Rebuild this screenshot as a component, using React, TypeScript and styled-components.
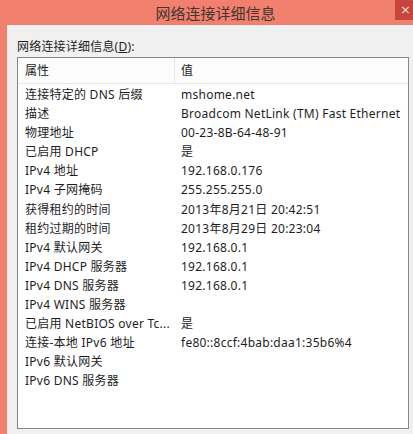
import React from 'react'
import styled, { createGlobalStyle } from 'styled-components'

const GlobalStyle = createGlobalStyle`
  html, body {
    margin: 0;
    padding: 0;
    background: #f0f0f0;
  }
  body {
    font-family: "Noto Sans", "Noto Sans CJK SC", sans-serif;
  }
`

const Window = styled.div`
  width: 413px;
  height: 434px;
  display: flex;
  flex-direction: column;
  background: #f1806f;
  overflow: hidden;
`

const TitleBar = styled.div`
  height: 25px;
  display: flex;
  align-items: stretch;
  flex-shrink: 0;
`

const Title = styled.div`
  flex: 1;
  padding-left: 36px;
  text-align: center;
  font-family: "Noto Sans CJK SC", sans-serif;
  font-size: 15px;
  line-height: 25px;
  color: #44352f;
`

const CloseButton = styled.div`
  width: 18px;
  height: 20px;
  background: #c8453d;
  color: #f4dcd8;
  font-family: "DejaVu Sans", sans-serif;
  font-size: 13px;
  line-height: 19px;
  padding-left: 5px;
  box-sizing: border-box;
`

const Frame = styled.div`
  flex: 1;
  display: flex;
  padding-left: 7px;
`

const Body = styled.div`
  flex: 1;
  background: #f0f0f0;
  padding: 14px 4px 5px 10px;
  display: flex;
  flex-direction: column;
`

const Label = styled.div`
  font-size: 12px;
  line-height: 16px;
  color: #1e1e1e;
  margin-bottom: 2px;
  letter-spacing: 0.2px;

  u {
    text-decoration: underline;
  }
`

const ListBox = styled.div`
  flex: 1;
  background: #fff;
  border: 1px solid #828790;
  display: flex;
  flex-direction: column;
`

const HeaderRow = styled.div`
  height: 25px;
  display: grid;
  grid-template-columns: 157px 1fr;
  border-bottom: 1px solid #e8e8e8;
  background: #fcfcfc;
`

const HeaderCell = styled.div<{ $divider?: boolean }>`
  padding-left: ${p => (p.$divider ? 7 : 6)}px;
  font-size: 12px;
  line-height: 25px;
  color: #1e1e1e;
  border-right: ${p => (p.$divider ? '1px solid #e5e5e5' : 'none')};
`

const Rows = styled.div`
  display: flex;
  flex-direction: column;
  padding-top: 1px;
`

const Row = styled.div`
  height: 19.1px;
  display: grid;
  grid-template-columns: 157px 1fr;
  font-size: 12px;
  line-height: 19px;
  letter-spacing: 0.25px;
  color: #1e1e1e;
`

const Cell = styled.div<{ $first?: boolean }>`
  padding-left: ${p => (p.$first ? 7 : 6)}px;
  white-space: nowrap;
  overflow: hidden;
  text-overflow: ellipsis;
`

const rows: [string, string][] = [
  ['连接特定的 DNS 后缀', 'mshome.net'],
  ['描述', 'Broadcom NetLink (TM) Fast Ethernet'],
  ['物理地址', '00-23-8B-64-48-91'],
  ['已启用 DHCP', '是'],
  ['IPv4 地址', '192.168.0.176'],
  ['IPv4 子网掩码', '255.255.255.0'],
  ['获得租约的时间', '2013年8月21日 20:42:51'],
  ['租约过期的时间', '2013年8月29日 20:23:04'],
  ['IPv4 默认网关', '192.168.0.1'],
  ['IPv4 DHCP 服务器', '192.168.0.1'],
  ['IPv4 DNS 服务器', '192.168.0.1'],
  ['IPv4 WINS 服务器', ''],
  ['已启用 NetBIOS over Tc...', '是'],
  ['连接-本地 IPv6 地址', 'fe80::8ccf:4bab:daa1:35b6%4'],
  ['IPv6 默认网关', ''],
  ['IPv6 DNS 服务器', ''],
]

export default function App() {
  return (
    <>
      <GlobalStyle />
      <Window>
        <TitleBar>
          <Title>网络连接详细信息</Title>
          <CloseButton>×</CloseButton>
        </TitleBar>
        <Frame>
          <Body>
            <Label>
              网络连接详细信息(<u>D</u>):
            </Label>
            <ListBox>
              <HeaderRow>
                <HeaderCell $divider>属性</HeaderCell>
                <HeaderCell>值</HeaderCell>
              </HeaderRow>
              <Rows>
                {rows.map(([k, v]) => (
                  <Row key={k}>
                    <Cell $first>{k}</Cell>
                    <Cell>{v}</Cell>
                  </Row>
                ))}
              </Rows>
            </ListBox>
          </Body>
        </Frame>
      </Window>
    </>
  )
}
